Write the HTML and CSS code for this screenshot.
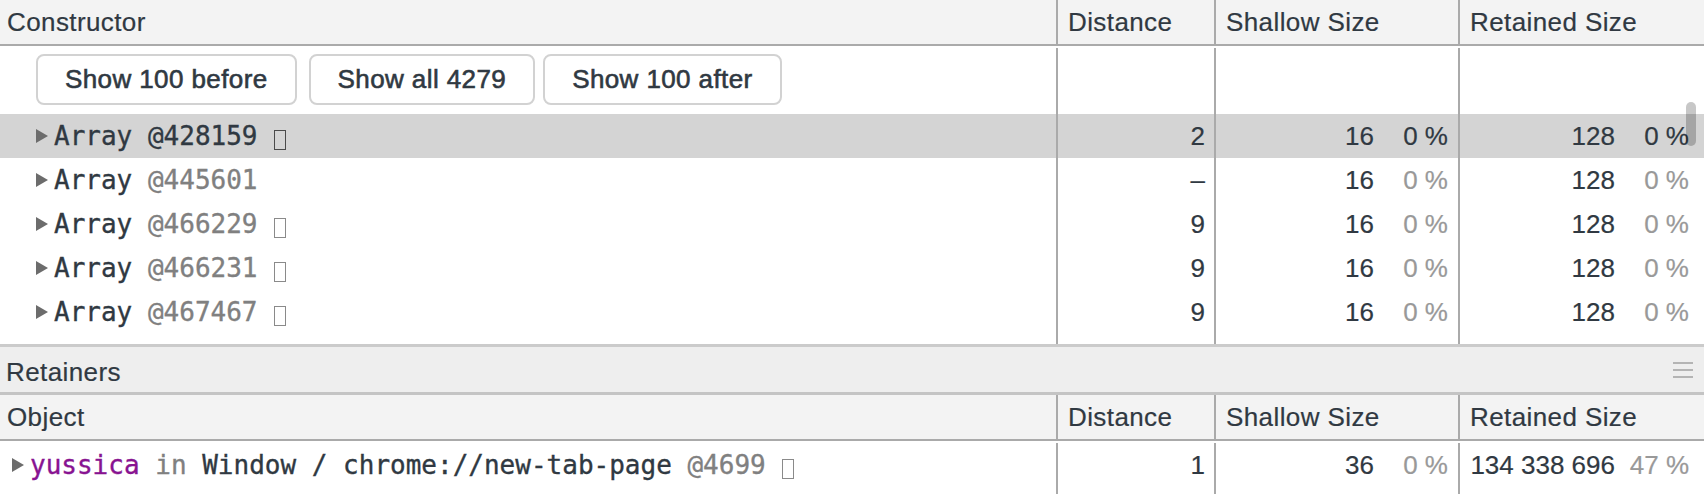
FILE: index.html
```html
<!DOCTYPE html>
<html>
<head>
<meta charset="utf-8">
<link rel="stylesheet" href="styles.css">
</head>
<body>
<div class="panel">
  <div class="top">
    <div class="row hdr">
      <div class="cell">Constructor</div>
      <div class="cell">Distance</div>
      <div class="cell">Shallow Size</div>
      <div class="cell">Retained Size</div>
    </div>
    <div class="body">
      <div class="row btnrow">
        <div class="cell">
          <div class="btns">
            <button class="btn b1">Show 100 before</button>
            <button class="btn b2">Show all 4279</button>
            <button class="btn">Show 100 after</button>
          </div>
        </div>
        <div class="cell"></div>
        <div class="cell"></div>
        <div class="cell"></div>
      </div>
      <div class="row data sel">
        <div class="cell name"><span class="tri"></span>Array <span class="id">@428159</span> <span class="tofu"></span></div>
        <div class="cell dist">2</div>
        <div class="cell num sh"><span>16</span><span class="pct">0 %</span></div>
        <div class="cell num rt"><span>128</span><span class="pct">0 %</span></div>
      </div>
      <div class="row data">
        <div class="cell name"><span class="tri"></span>Array <span class="id">@445601</span></div>
        <div class="cell dist">–</div>
        <div class="cell num sh"><span>16</span><span class="pct">0 %</span></div>
        <div class="cell num rt"><span>128</span><span class="pct">0 %</span></div>
      </div>
      <div class="row data">
        <div class="cell name"><span class="tri"></span>Array <span class="id">@466229</span> <span class="tofu"></span></div>
        <div class="cell dist">9</div>
        <div class="cell num sh"><span>16</span><span class="pct">0 %</span></div>
        <div class="cell num rt"><span>128</span><span class="pct">0 %</span></div>
      </div>
      <div class="row data">
        <div class="cell name"><span class="tri"></span>Array <span class="id">@466231</span> <span class="tofu"></span></div>
        <div class="cell dist">9</div>
        <div class="cell num sh"><span>16</span><span class="pct">0 %</span></div>
        <div class="cell num rt"><span>128</span><span class="pct">0 %</span></div>
      </div>
      <div class="row data">
        <div class="cell name"><span class="tri"></span>Array <span class="id">@467467</span> <span class="tofu"></span></div>
        <div class="cell dist">9</div>
        <div class="cell num sh"><span>16</span><span class="pct">0 %</span></div>
        <div class="cell num rt"><span>128</span><span class="pct">0 %</span></div>
      </div>
      <div class="row filler">
        <div class="cell"></div>
        <div class="cell"></div>
        <div class="cell"></div>
        <div class="cell"></div>
      </div>
    </div>
    <div class="thumb"></div>
  </div>
  <div class="splitter">
    <span class="split-title">Retainers</span>
    <span class="menu"><i></i><i></i><i></i></span>
  </div>
  <div class="bottom">
    <div class="row hdr">
      <div class="cell">Object</div>
      <div class="cell">Distance</div>
      <div class="cell">Shallow Size</div>
      <div class="cell">Retained Size</div>
    </div>
    <div class="body">
      <div class="row data">
        <div class="cell name root"><span class="tri"></span><span class="prop">yussica</span> <span class="id">in</span> Window / chrome://new-tab-page <span class="id">@4699</span> <span class="tofu"></span></div>
        <div class="cell dist">1</div>
        <div class="cell num sh"><span>36</span><span class="pct">0 %</span></div>
        <div class="cell num rt"><span>134 338 696</span><span class="pct">47 %</span></div>
      </div>
      <div class="row filler">
        <div class="cell"></div>
        <div class="cell"></div>
        <div class="cell"></div>
        <div class="cell"></div>
      </div>
    </div>
  </div>
</div>
</body>
</html>
```

FILE: styles.css
```css
* { box-sizing: border-box; }
html, body { margin: 0; padding: 0; }
body {
  width: 1704px;
  height: 494px;
  overflow: hidden;
  background: #fff;
  font-family: "Liberation Sans", Arial, sans-serif;
  font-size: 26px;
  color: #303942;
  -webkit-text-stroke-width: 0.2px;
}
.panel { display: flex; flex-direction: column; height: 494px; }
.top { position: relative; height: 344px; display: flex; flex-direction: column; }
.bottom { flex: 1; display: flex; flex-direction: column; }
.row { display: grid; grid-template-columns: 1056px 158px 244px 1fr; }
.cell { min-width: 0; white-space: nowrap; overflow: hidden; }
.cell + .cell { border-left: 2px solid #aaaaaa; }
.hdr { height: 46px; background: #f3f3f3; border-bottom: 2px solid #aaaaaa; flex: none; }
.hdr .cell { line-height: 44px; padding: 0 10px; letter-spacing: 0.4px; }
.hdr .cell:first-child { padding-left: 7px; }
.body { padding-top: 2px; flex: 1; display: flex; flex-direction: column; }
.btnrow { height: 66px; flex: none; }
.btns { display: flex; padding: 6px 0 0 36px; }
.btn {
  appearance: none;
  height: 51px;
  padding: 0 27px;
  border: 2px solid #d2d2d2;
  border-radius: 8px;
  background: #fff;
  font-family: "Liberation Sans", Arial, sans-serif;
  font-size: 26px;
  letter-spacing: 0.4px;
  -webkit-text-stroke: 0.6px #303942;
  color: #303942;
}
.b1 { margin-right: 12px; }
.b2 { margin-right: 8px; }
.data { height: 44px; line-height: 44px; flex: none; }
.sel { background: #d4d4d4; }
.filler { flex: 1; }
.name {
  font-family: "DejaVu Sans Mono", monospace;
  font-size: 26px;
  padding-left: 36px;
  white-space: pre;
  -webkit-text-stroke-width: 0.35px;
}
.name.root { padding-left: 12px; }
.tri {
  display: inline-block;
  vertical-align: middle;
  width: 0; height: 0;
  border-left: 12px solid #6c6c6c;
  border-top: 7px solid transparent;
  border-bottom: 7px solid transparent;
  margin-right: 6px;
  margin-top: -4px;
}
.id { color: #808080; }
.sel .id { color: #303942; }
.prop { color: #881391; }
.tofu {
  display: inline-block;
  width: 12px;
  height: 20px;
  border: 1.5px solid #8a8a8a;
  vertical-align: -5px;
  margin-left: 1px;
}
.sel .tofu { border-color: #4a4a4a; }
.dist { text-align: right; padding-right: 9px; }
.num { display: flex; justify-content: flex-end; }
.num.sh { padding-right: 10px; }
.num.rt { padding-right: 15px; }
.pct { width: 74px; text-align: right; color: #999999; flex: none; }
.sel .pct { color: #303942; }
.thumb {
  position: absolute;
  left: 1686px;
  top: 102px;
  width: 10px;
  height: 44px;
  border-radius: 5px;
  background: rgba(0, 0, 0, 0.22);
}
.splitter {
  height: 51px;
  flex: none;
  background: #eeeeee;
  border-top: 3px solid #cbcbcb;
  border-bottom: 3px solid #c4c4c4;
  display: flex;
  align-items: center;
  justify-content: space-between;
  padding: 5px 11px 0 6px;
  letter-spacing: 0.4px;
}
.menu { display: flex; flex-direction: column; gap: 5px; width: 20px; margin-top: -5px; }
.menu i { display: block; height: 2px; background: #b4b4b4; }
```
